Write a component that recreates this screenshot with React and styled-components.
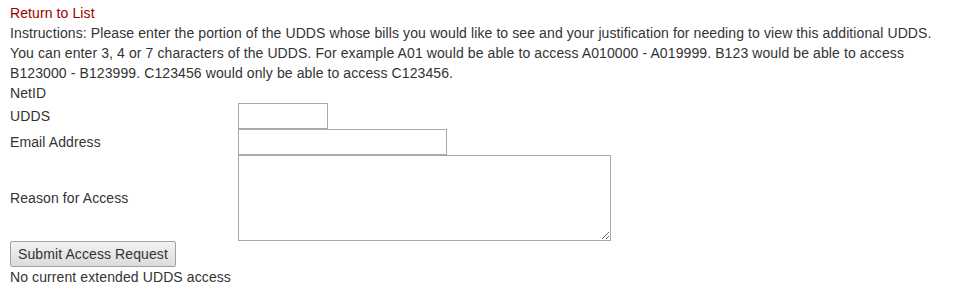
import React from "react";
import styled, { createGlobalStyle } from "styled-components";

const Global = createGlobalStyle`
  html, body { margin: 0; padding: 0; background: #fff; }
  body { font-family: "Liberation Sans", Arial, sans-serif; font-size: 14px; line-height: 20px; color: #333; letter-spacing: 0.1px; }
`;

const Page = styled.div`
  padding: 3px 10px 0 10px;
  width: 944px;
  box-sizing: border-box;
`;

const ReturnLink = styled.a`
  display: block;
  color: #9b0000;
  text-decoration: none;
`;

const Paragraph = styled.div``;

const Form = styled.div`
  display: grid;
  grid-template-columns: 228px 1fr;
  align-items: center;
`;

const Label = styled.div`
  line-height: 20px;
`;

const Cell = styled.div`
  display: flex;
  align-items: center;
  min-height: 20px;
`;

const TextInput = styled.input`
  box-sizing: border-box;
  width: ${(p) => p.$w}px;
  height: 26px;
  border: 1px solid #a9a9a9;
  margin: 0;
  padding: 2px 4px;
  font: inherit;
  display: block;
`;

const TextArea = styled.textarea`
  box-sizing: border-box;
  width: 373px;
  height: 86px;
  border: 1px solid #a9a9a9;
  margin: 0;
  padding: 2px;
  font: inherit;
  display: block;
`;

const Button = styled.button`
  box-sizing: border-box;
  display: block;
  margin: 0;
  width: 166px;
  height: 26px;
  padding: 0;
  font-family: "Liberation Sans", Arial, sans-serif;
  font-size: 14px;
  letter-spacing: 0.1px;
  color: #333;
  background: linear-gradient(#f2f2f2, #dcdcdc);
  border: 1px solid #a0a0a0;
  border-radius: 2px;
`;

const Note = styled.div``;

export default function App() {
  return (
    <>
      <Global />
      <Page>
        <ReturnLink href="#">Return to List</ReturnLink>
        <Paragraph>
          Instructions: Please enter the portion of the UDDS whose bills you would like to see and your justification for needing to view this additional UDDS. You can enter 3, 4 or 7 characters of the UDDS. For example A01 would be able to access A010000 - A019999. B123 would be able to access B123000 - B123999. C123456 would only be able to access C123456.
        </Paragraph>
        <Form>
          <Label>NetID</Label>
          <Cell />
          <Label>UDDS</Label>
          <Cell>
            <TextInput $w={90} />
          </Cell>
          <Label>Email Address</Label>
          <Cell>
            <TextInput $w={209} />
          </Cell>
          <Label>Reason for Access</Label>
          <Cell>
            <TextArea />
          </Cell>
        </Form>
        <Button>Submit Access Request</Button>
        <Note>No current extended UDDS access</Note>
      </Page>
    </>
  );
}
